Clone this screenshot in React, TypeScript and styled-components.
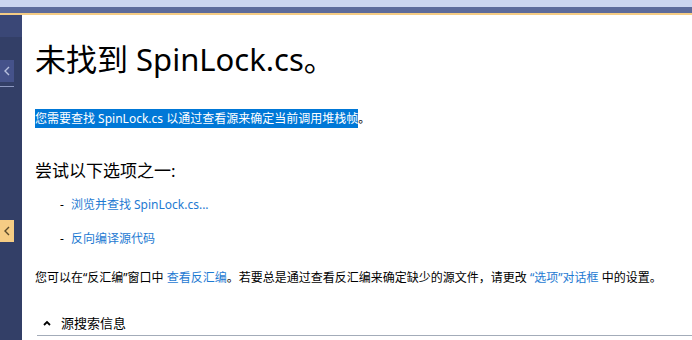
import React from "react";
import styled, { createGlobalStyle } from "styled-components";

const GlobalStyle = createGlobalStyle`
  html, body {
    margin: 0;
    padding: 0;
    overflow: hidden;
    background: #ffffff;
  }
`;

const Frame = styled.div`
  width: 692px;
  height: 340px;
  display: flex;
  flex-direction: column;
  font-family: "Noto Sans", "Noto Sans CJK SC", sans-serif;
  overflow: hidden;
`;

const TopBand = styled.div`
  height: 7px;
  background: #cbd5ef;
  flex-shrink: 0;
`;

const TabStrip = styled.div`
  height: 6px;
  background: #5d6b9b;
  border-bottom: 2px solid #f5cc84;
  flex-shrink: 0;
`;

const Body = styled.div`
  flex: 1;
  display: flex;
  min-height: 0;
`;

const Sidebar = styled.div`
  width: 22px;
  flex-shrink: 0;
  background: #333f67;
  display: flex;
  flex-direction: column;
`;

const SideHeader = styled.div`
  height: 22px;
  margin-bottom: 23px;
  background: #3a4776;
`;

const SideTab = styled.div<{ $active?: boolean; $gap?: number }>`
  width: 14px;
  height: 22px;
  margin-top: ${(p) => p.$gap ?? 0}px;
  display: flex;
  align-items: center;
  justify-content: center;
  background: ${(p) => (p.$active ? "#f5cc84" : "#45528a")};
  color: ${(p) => (p.$active ? "#5a4a2a" : "#b7c0de")};
`;

const SideRule = styled.div`
  width: 14px;
  height: 1px;
  margin-top: 4px;
  background: #8d98c0;
`;

const Content = styled.main`
  flex: 1;
  padding: 0 0 0 13px;
  color: #000000;
  display: flex;
  flex-direction: column;
`;

const Title = styled.h1`
  margin: 24px 0 0;
  font-size: 31px;
  font-weight: 400;
  line-height: 40px;
`;

const Lead = styled.p`
  margin: 31px 0 0;
  font-size: 12px;
  line-height: 17px;
`;

const Selected = styled.span`
  background: #0078d7;
  color: #ffffff;
  padding: 1px 0;
`;

const SubHeading = styled.h2`
  margin: 33px 0 0;
  font-size: 17px;
  font-weight: 400;
  line-height: 22px;
`;

const OptionList = styled.ul`
  list-style: none;
  margin: 14px 0 0;
  padding: 0 0 0 25px;
  display: flex;
  flex-direction: column;
  gap: 17px;
`;

const OptionItem = styled.li`
  font-size: 12px;
  line-height: 17px;
  display: flex;
  gap: 7px;
`;

const Link = styled.a`
  color: #1e7ad2;
  text-decoration: none;
  cursor: pointer;
`;

const Note = styled.p`
  margin: 22px 0 0;
  font-size: 12px;
  line-height: 17px;
  white-space: nowrap;
`;

const Section = styled.div`
  margin-top: 28px;
  margin-left: 2px;
  display: flex;
  align-items: center;
  gap: 10px;
  padding: 0 0 3px 6px;
  border-bottom: 1px solid #a3acb9;
  font-size: 13px;
  line-height: 18px;
`;

const Caret = styled.svg`
  width: 8px;
  height: 6px;
`;

const Chevron = styled.svg`
  width: 8px;
  height: 10px;
`;

function BackChevron() {
  return (
    <Chevron viewBox="0 0 8 10" fill="none" stroke="currentColor" strokeWidth="1.4">
      <path d="M6 1L2 5l4 4" />
    </Chevron>
  );
}

export default function App() {
  return (
    <Frame>
      <GlobalStyle />
      <TopBand />
      <TabStrip />
      <Body>
        <Sidebar>
          <SideHeader />
          <SideTab>
            <BackChevron />
          </SideTab>
          <SideRule />
          <SideTab $active $gap={133}>
            <BackChevron />
          </SideTab>
        </Sidebar>
        <Content>
          <Title>未找到 SpinLock.cs。</Title>
          <Lead>
            <Selected>您需要查找 SpinLock.cs 以通过查看源来确定当前调用堆栈帧</Selected>。
          </Lead>
          <SubHeading>尝试以下选项之一:</SubHeading>
          <OptionList>
            <OptionItem>
              <span>-</span>
              <Link>浏览并查找 SpinLock.cs...</Link>
            </OptionItem>
            <OptionItem>
              <span>-</span>
              <Link>反向编译源代码</Link>
            </OptionItem>
          </OptionList>
          <Note>
            您可以在“反汇编”窗口中 <Link>查看反汇编</Link>。若要总是通过查看反汇编来确定缺少的源文件，请更改{" "}
            <Link>“选项”对话框</Link> 中的设置。
          </Note>
          <Section>
            <Caret viewBox="0 0 8 6" fill="none" stroke="#000" strokeWidth="1.8">
              <path d="M1 5l3-3 3 3" />
            </Caret>
            <span>源搜索信息</span>
          </Section>
        </Content>
      </Body>
    </Frame>
  );
}
